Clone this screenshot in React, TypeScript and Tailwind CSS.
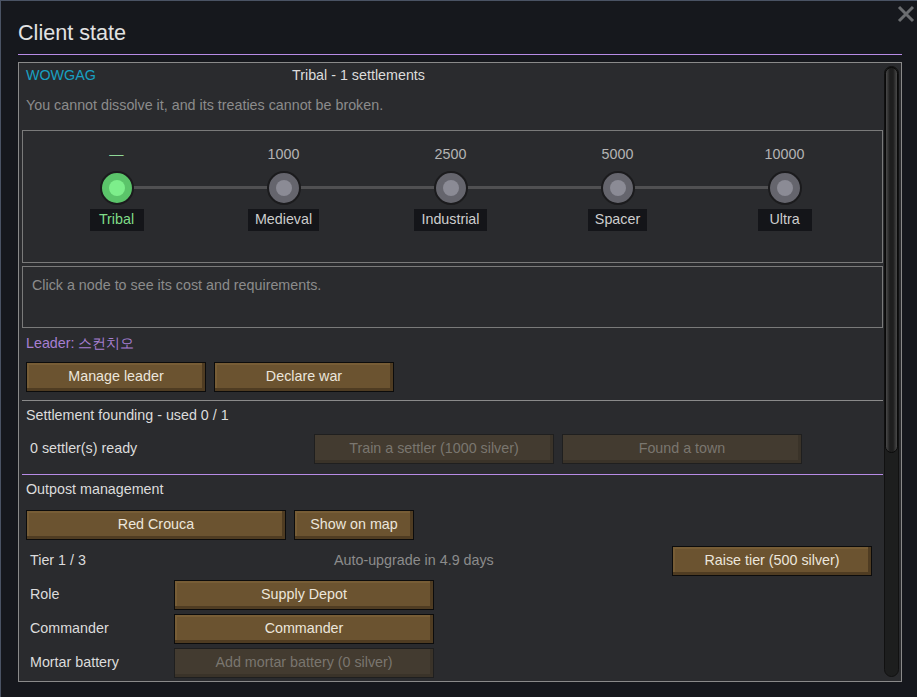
import React from "react";

const TIERS = [
  { cost: "—", name: "Tribal", active: true },
  { cost: "1000", name: "Medieval", active: false },
  { cost: "2500", name: "Industrial", active: false },
  { cost: "5000", name: "Spacer", active: false },
  { cost: "10000", name: "Ultra", active: false },
];

function Btn({ label, w, disabled = false }: { label: string; w: string; disabled?: boolean }) {
  return (
    <div
      className={`${w} h-[30px] flex items-center justify-center border ${
        disabled
          ? "bg-[#433b30] border-[#1f1f1f] text-[#7a766f] shadow-[inset_-3px_-3px_0_#3a3329]"
          : "bg-[#6b5330] border-[#0c0c0c] text-[#ebe6dc] shadow-[inset_-3px_-3px_0_#4f3c22,inset_2px_2px_0_#775d36]"
      }`}
    >
      {label}
    </div>
  );
}

function TierNode({ cost, name, active, last }: { cost: string; name: string; active: boolean; last: boolean }) {
  return (
    <div className="relative flex flex-col items-center pt-[15px]">
      {!last && <div className="absolute left-1/2 top-[55px] w-full h-[3px] bg-[#505052]" />}
      <div className={`h-[16px] leading-[16px] ${active ? "text-[#8fd897]" : "text-[#b4b4b4]"}`}>{cost}</div>
      <div
        className={`relative z-10 mt-[9px] w-[34px] h-[34px] rounded-full border-2 border-[#1b1b1d] flex items-center justify-center ${
          active ? "bg-[#5bc46a]" : "bg-[#65656d]"
        }`}
      >
        <div className={`w-[16px] h-[16px] rounded-full ${active ? "bg-[#7dee8b]" : "bg-[#8b8b95]"}`} />
      </div>
      <div
        className={`mt-[4px] h-[22px] min-w-[54px] px-[7px] flex items-center justify-center bg-[#141519] ${
          active ? "text-[#7fdc88]" : "text-[#cdcdcd]"
        }`}
      >
        {name}
      </div>
    </div>
  );
}

export default function App() {
  return (
    <div className="relative w-[917px] h-[697px] overflow-hidden bg-[#16181d] border-t border-l border-[#4a5364] text-[14.3px] text-[#dcdcdc] font-['Liberation_Sans',Arial,sans-serif]">
      {/* close */}
      <svg className="absolute top-[4px] right-[2px]" width="18" height="18" viewBox="0 0 18 18">
        <path d="M2 2 L16 16 M16 2 L2 16" stroke="#6b6d70" strokeWidth="3" />
      </svg>

      <div className="h-[53px] pl-[17px] pt-[20px] text-[21.6px] leading-[24px] text-[#e2e2e2]">Client state</div>
      <div className="ml-[17px] w-[884px] h-px bg-[#b78be6]" />

      <div className="mt-[7px] ml-[17px] w-[884px] h-[620px] border border-[#8a8a8a] bg-[#2a2b2e] flex">
        <div className="w-[861px] ml-[3px] flex flex-col">
          <div className="mt-[3px] h-[20px] pl-[4px] flex items-center">
            <span className="w-[266px] text-[#18a0c2]">WOWGAG</span>
            <span>Tribal - 1 settlements</span>
          </div>
          <div className="mt-[10px] h-[20px] pl-[4px] flex items-center text-[#8c8c8c]">
            You cannot dissolve it, and its treaties cannot be broken.
          </div>

          <div className="mt-[14px] h-[133px] border border-[#7a7a7a]">
            <div className="ml-[10px] grid grid-cols-[repeat(5,167px)]">
              {TIERS.map((t, i) => (
                <TierNode key={t.name} {...t} last={i === TIERS.length - 1} />
              ))}
            </div>
          </div>

          <div className="mt-[3px] h-[62px] border border-[#7a7a7a] pl-[9px] pt-[9px]">
            <div className="h-[20px] flex items-center text-[#8c8c8c]">Click a node to see its cost and requirements.</div>
          </div>

          <div className="mt-[6px] h-[20px] pl-[4px] flex items-center text-[#a77fd2]">
            Leader: 스컨치오
          </div>
          <div className="mt-[8px] pl-[4px] flex gap-[8px]">
            <Btn label="Manage leader" w="w-[180px]" />
            <Btn label="Declare war" w="w-[180px]" />
          </div>

          <div className="mt-[8px] h-px bg-[#8a8a8a]" />
          <div className="mt-[5px] h-[20px] pl-[4px] flex items-center">Settlement founding - used 0 / 1</div>
          <div className="mt-[8px] pl-[8px] flex items-center">
            <span className="w-[284px]">0 settler(s) ready</span>
            <div className="flex gap-[8px]">
              <Btn label="Train a settler (1000 silver)" w="w-[240px]" disabled />
              <Btn label="Found a town" w="w-[240px]" disabled />
            </div>
          </div>

          <div className="mt-[10px] h-px bg-[#b78be6]" />
          <div className="mt-[5px] h-[20px] pl-[4px] flex items-center">Outpost management</div>
          <div className="mt-[10px] pl-[4px] flex gap-[8px]">
            <Btn label="Red Crouca" w="w-[260px]" />
            <Btn label="Show on map" w="w-[120px]" />
          </div>
          <div className="mt-[6px] pl-[8px] flex items-center">
            <span className="w-[304px]">Tier 1 / 3</span>
            <span className="w-[338px] text-[#8c8c8c]">Auto-upgrade in 4.9 days</span>
            <Btn label="Raise tier (500 silver)" w="w-[200px]" />
          </div>
          <div className="mt-[4px] pl-[8px] flex items-center">
            <span className="w-[144px]">Role</span>
            <Btn label="Supply Depot" w="w-[260px]" />
          </div>
          <div className="mt-[4px] pl-[8px] flex items-center">
            <span className="w-[144px]">Commander</span>
            <Btn label="Commander" w="w-[260px]" />
          </div>
          <div className="mt-[4px] pl-[8px] flex items-center">
            <span className="w-[144px]">Mortar battery</span>
            <Btn label="Add mortar battery (0 silver)" w="w-[260px]" disabled />
          </div>
        </div>

        {/* scrollbar */}
        <div className="ml-[1px] mt-[3px] w-[15px] h-[611px] rounded-full bg-[#1d1e1e] border border-[#111]">
          <div className="h-[386px] rounded-full border border-[#0a0a0a] bg-[linear-gradient(to_right,#4a4a4a,#1e1e1e_35%,#1e1e1e_65%,#4a4a4a)]" />
        </div>
      </div>
    </div>
  );
}
